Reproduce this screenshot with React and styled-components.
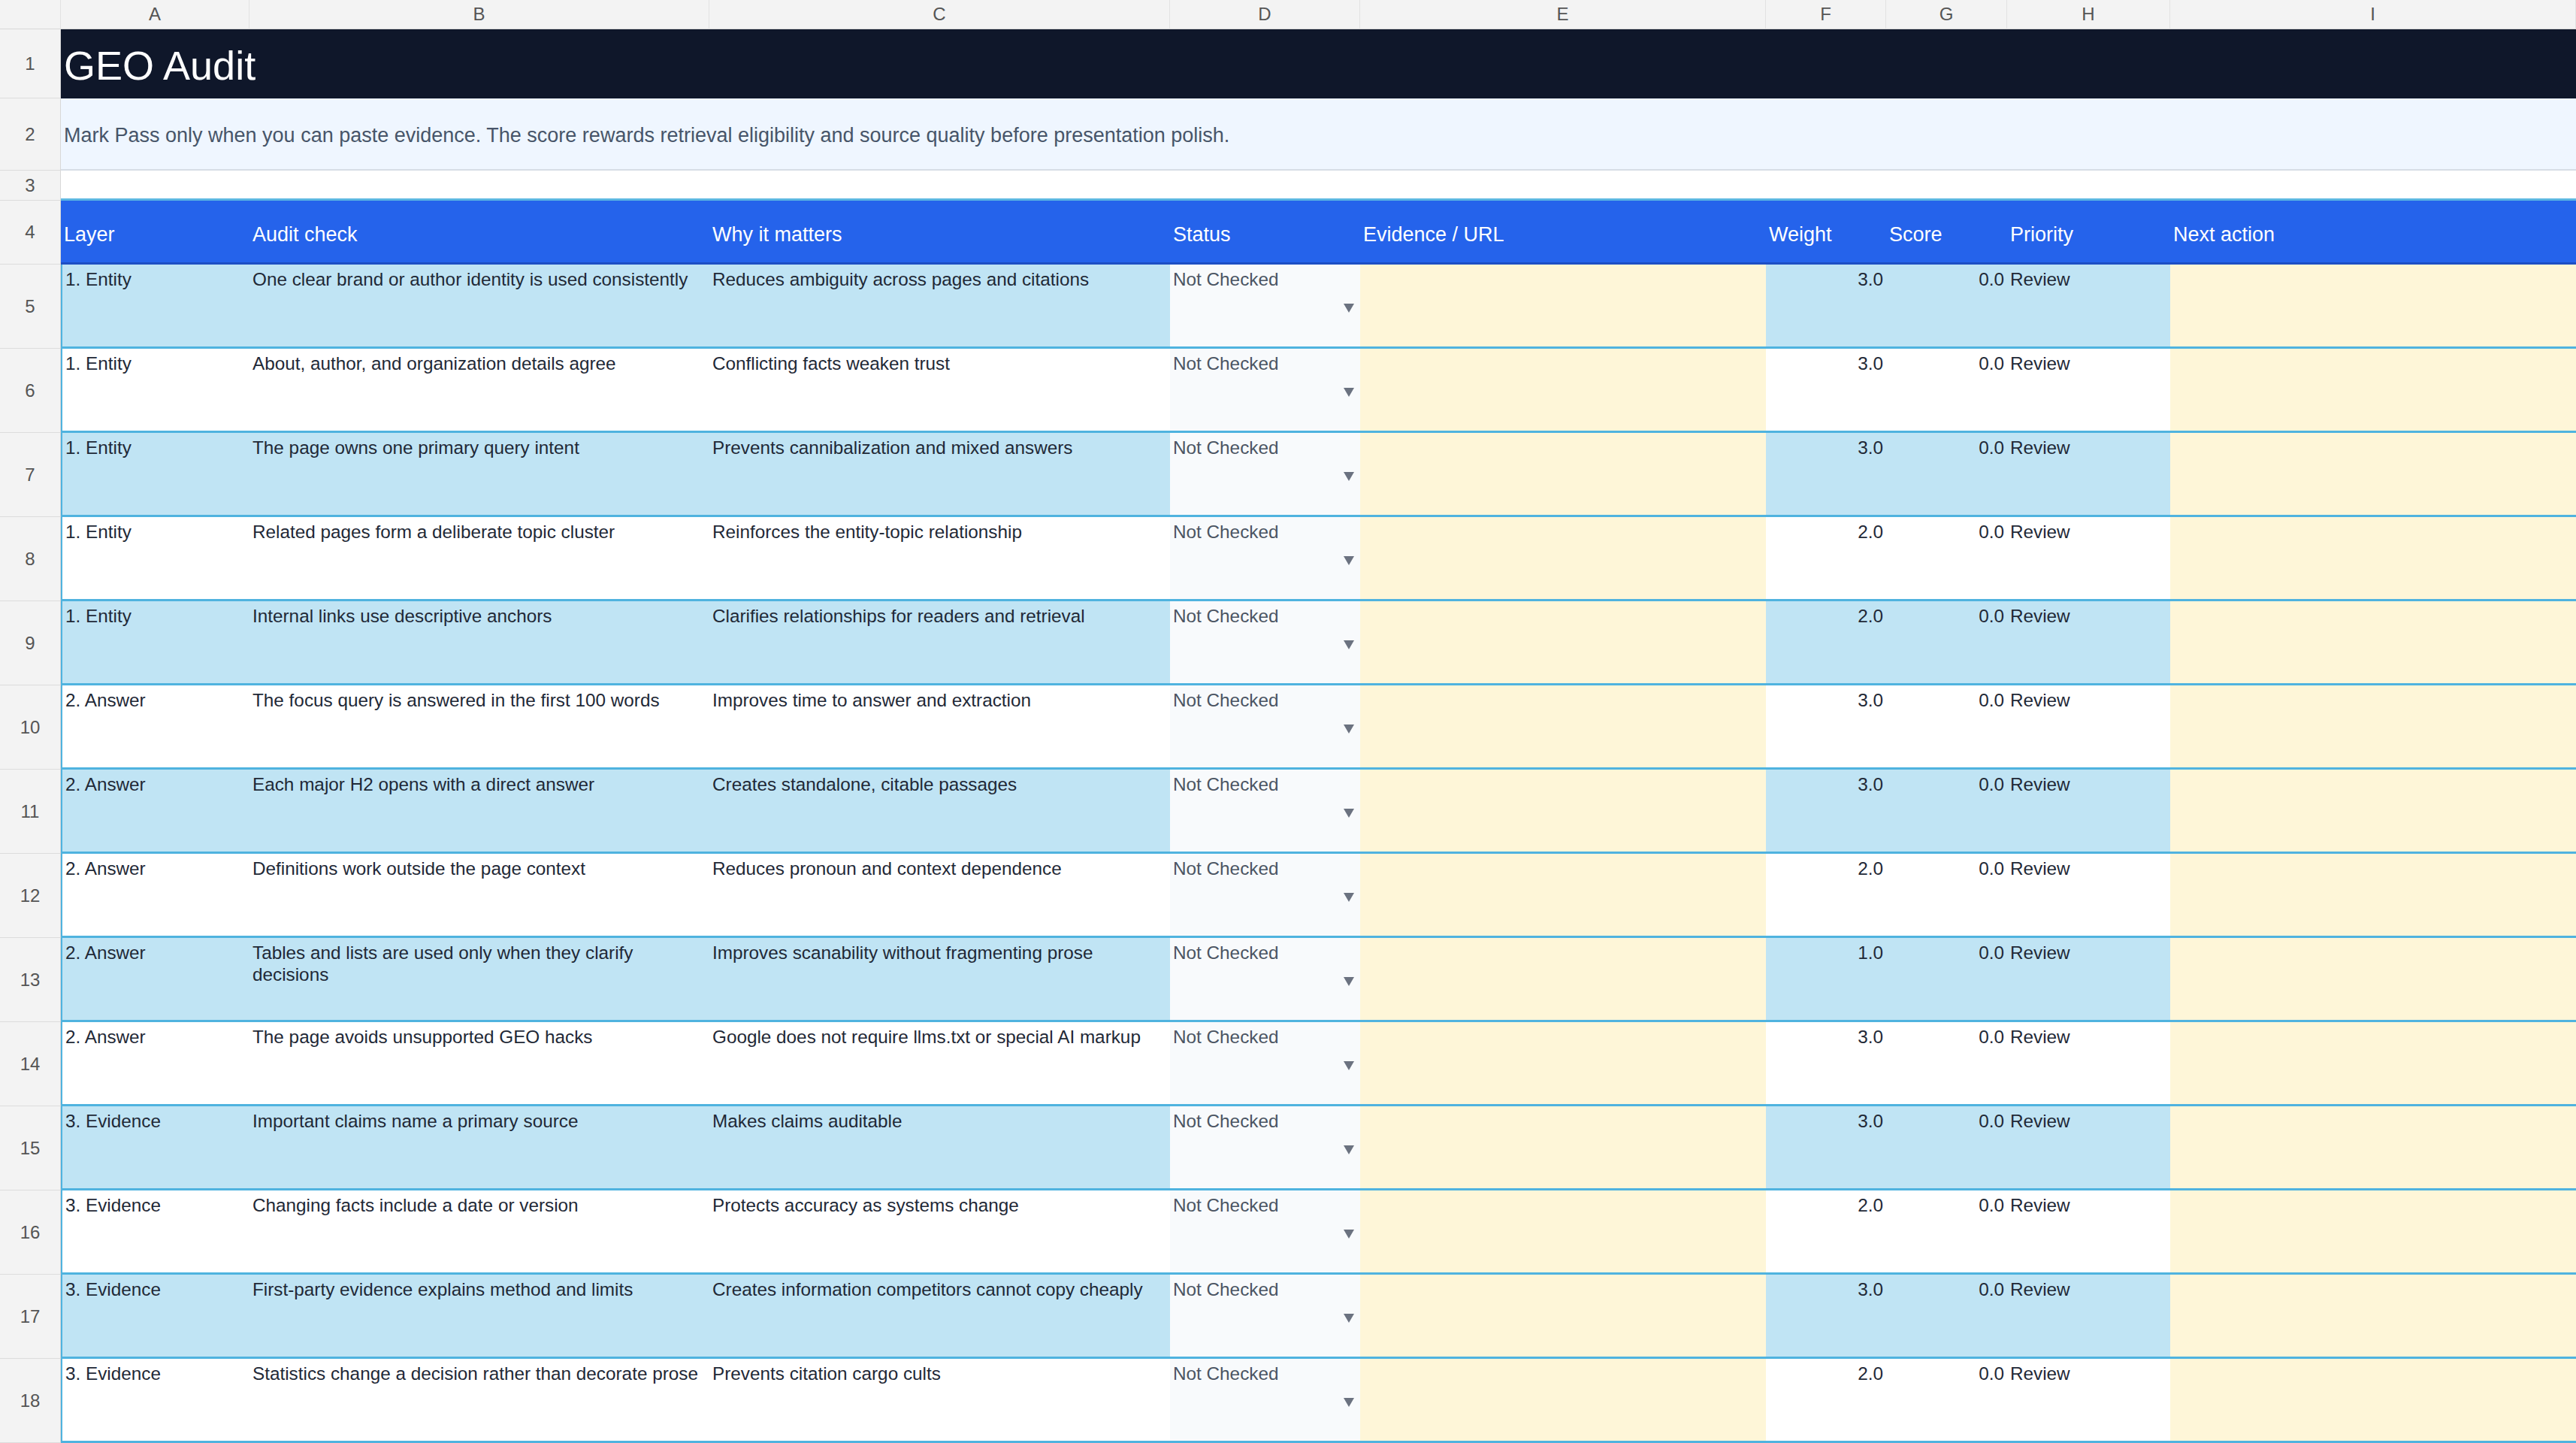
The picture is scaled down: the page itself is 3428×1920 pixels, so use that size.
import React from "react";
import styled, { createGlobalStyle } from "styled-components";

const Global = createGlobalStyle`
  html, body { margin: 0; padding: 0; background: #fff; }
  body { font-family: "Liberation Sans", Arial, sans-serif; overflow: hidden; }
`;

const COLS = "81px 251px 612px 613px 253px 540px 160px 161px 217px 540px";

const Sheet = styled.div`
  width: 3428px;
  height: 1920px;
  overflow: hidden;
  display: flex;
  flex-direction: column;
`;

const Row = styled.div`
  display: grid;
  grid-template-columns: ${COLS};
  height: ${(p) => p.h}px;
  flex-shrink: 0;
`;

const ColHead = styled.div`
  background: #f3f3f3;
  border-right: 1px solid #e2e2e2;
  border-bottom: 1px solid #d8d8d8;
  color: #555;
  font-size: 24px;
  display: flex;
  align-items: center;
  justify-content: center;
`;

const RowNum = styled.div`
  background: #f3f3f3;
  border-bottom: 1px solid #dcdcdc;
  border-right: 1px solid #d8d8d8;
  color: #555;
  font-size: 24px;
  display: flex;
  align-items: center;
  justify-content: center;
`;

const Title = styled.div`
  grid-column: 2 / -1;
  background: #0f172a;
  color: #fff;
  font-size: 54px;
  display: flex;
  align-items: center;
  padding-left: 4px;
  padding-top: 4px;
`;

const Note = styled.div`
  grid-column: 2 / -1;
  background: #eff6ff;
  color: #475569;
  font-size: 27px;
  display: flex;
  align-items: center;
  padding-left: 4px;
  padding-top: 4px;
  border-bottom: 2px solid #d6dde6;
`;

const Blank = styled.div`
  grid-column: 2 / -1;
  background: #fff;
  border-bottom: 3px solid #5cb7e2;
`;

const Head = styled.div`
  background: #2563eb;
  color: #fff;
  font-size: 27px;
  display: flex;
  align-items: center;
  padding: 8px 4px 0;
  border-bottom: 3px solid #1d4fc4;
`;

const Cell = styled.div`
  position: relative;
  background: ${(p) => p.bg};
  color: ${(p) => p.c || "#1f2937"};
  font-size: 24.3px;
  line-height: 29px;
  padding: 5px 4px 0;
  text-align: ${(p) => (p.right ? "right" : "left")};
  border-bottom: 3px solid #4fb3df;
  ${(p) => (p.first ? "border-left: 2px solid #4fb3df;" : "")}
  overflow: hidden;
`;

const Arrow = styled.span`
  position: absolute;
  right: 8px;
  top: 52px;
  width: 0;
  height: 0;
  border-left: 7px solid transparent;
  border-right: 7px solid transparent;
  border-top: 12px solid #6b7280;
`;

const data = [
  ["1. Entity", "One clear brand or author identity is used consistently", "Reduces ambiguity across pages and citations", "3.0"],
  ["1. Entity", "About, author, and organization details agree", "Conflicting facts weaken trust", "3.0"],
  ["1. Entity", "The page owns one primary query intent", "Prevents cannibalization and mixed answers", "3.0"],
  ["1. Entity", "Related pages form a deliberate topic cluster", "Reinforces the entity-topic relationship", "2.0"],
  ["1. Entity", "Internal links use descriptive anchors", "Clarifies relationships for readers and retrieval", "2.0"],
  ["2. Answer", "The focus query is answered in the first 100 words", "Improves time to answer and extraction", "3.0"],
  ["2. Answer", "Each major H2 opens with a direct answer", "Creates standalone, citable passages", "3.0"],
  ["2. Answer", "Definitions work outside the page context", "Reduces pronoun and context dependence", "2.0"],
  ["2. Answer", "Tables and lists are used only when they clarify decisions", "Improves scanability without fragmenting prose", "1.0"],
  ["2. Answer", "The page avoids unsupported GEO hacks", "Google does not require llms.txt or special AI markup", "3.0"],
  ["3. Evidence", "Important claims name a primary source", "Makes claims auditable", "3.0"],
  ["3. Evidence", "Changing facts include a date or version", "Protects accuracy as systems change", "2.0"],
  ["3. Evidence", "First-party evidence explains method and limits", "Creates information competitors cannot copy cheaply", "3.0"],
  ["3. Evidence", "Statistics change a decision rather than decorate prose", "Prevents citation cargo cults", "2.0"],
];

const letters = ["A", "B", "C", "D", "E", "F", "G", "H", "I"];
const heads = ["Layer", "Audit check", "Why it matters", "Status", "Evidence / URL", "Weight", "Score", "Priority", "Next action"];

export default function App() {
  return (
    <Sheet>
      <Global />
      <Row h={39}>
        <ColHead />
        {letters.map((l) => <ColHead key={l}>{l}</ColHead>)}
      </Row>
      <Row h={92}>
        <RowNum>1</RowNum>
        <Title>GEO Audit</Title>
      </Row>
      <Row h={96}>
        <RowNum>2</RowNum>
        <Note>Mark Pass only when you can paste evidence. The score rewards retrieval eligibility and source quality before presentation polish.</Note>
      </Row>
      <Row h={40}>
        <RowNum>3</RowNum>
        <Blank />
      </Row>
      <Row h={85}>
        <RowNum>4</RowNum>
        {heads.map((h) => <Head key={h}>{h}</Head>)}
      </Row>
      {data.map((d, i) => {
        const bg = i % 2 === 0 ? "#c0e4f4" : "#ffffff";
        return (
          <Row h={112} key={i}>
            <RowNum>{i + 5}</RowNum>
            <Cell bg={bg} first>{d[0]}</Cell>
            <Cell bg={bg}>{d[1]}</Cell>
            <Cell bg={bg}>{d[2]}</Cell>
            <Cell bg="#f8fafc" c="#4b5563">Not Checked<Arrow /></Cell>
            <Cell bg="#fef6d8" />
            <Cell bg={bg} right>{d[3]}</Cell>
            <Cell bg={bg} right>0.0</Cell>
            <Cell bg={bg}>Review</Cell>
            <Cell bg="#fef6d8" />
          </Row>
        );
      })}
    </Sheet>
  );
}
